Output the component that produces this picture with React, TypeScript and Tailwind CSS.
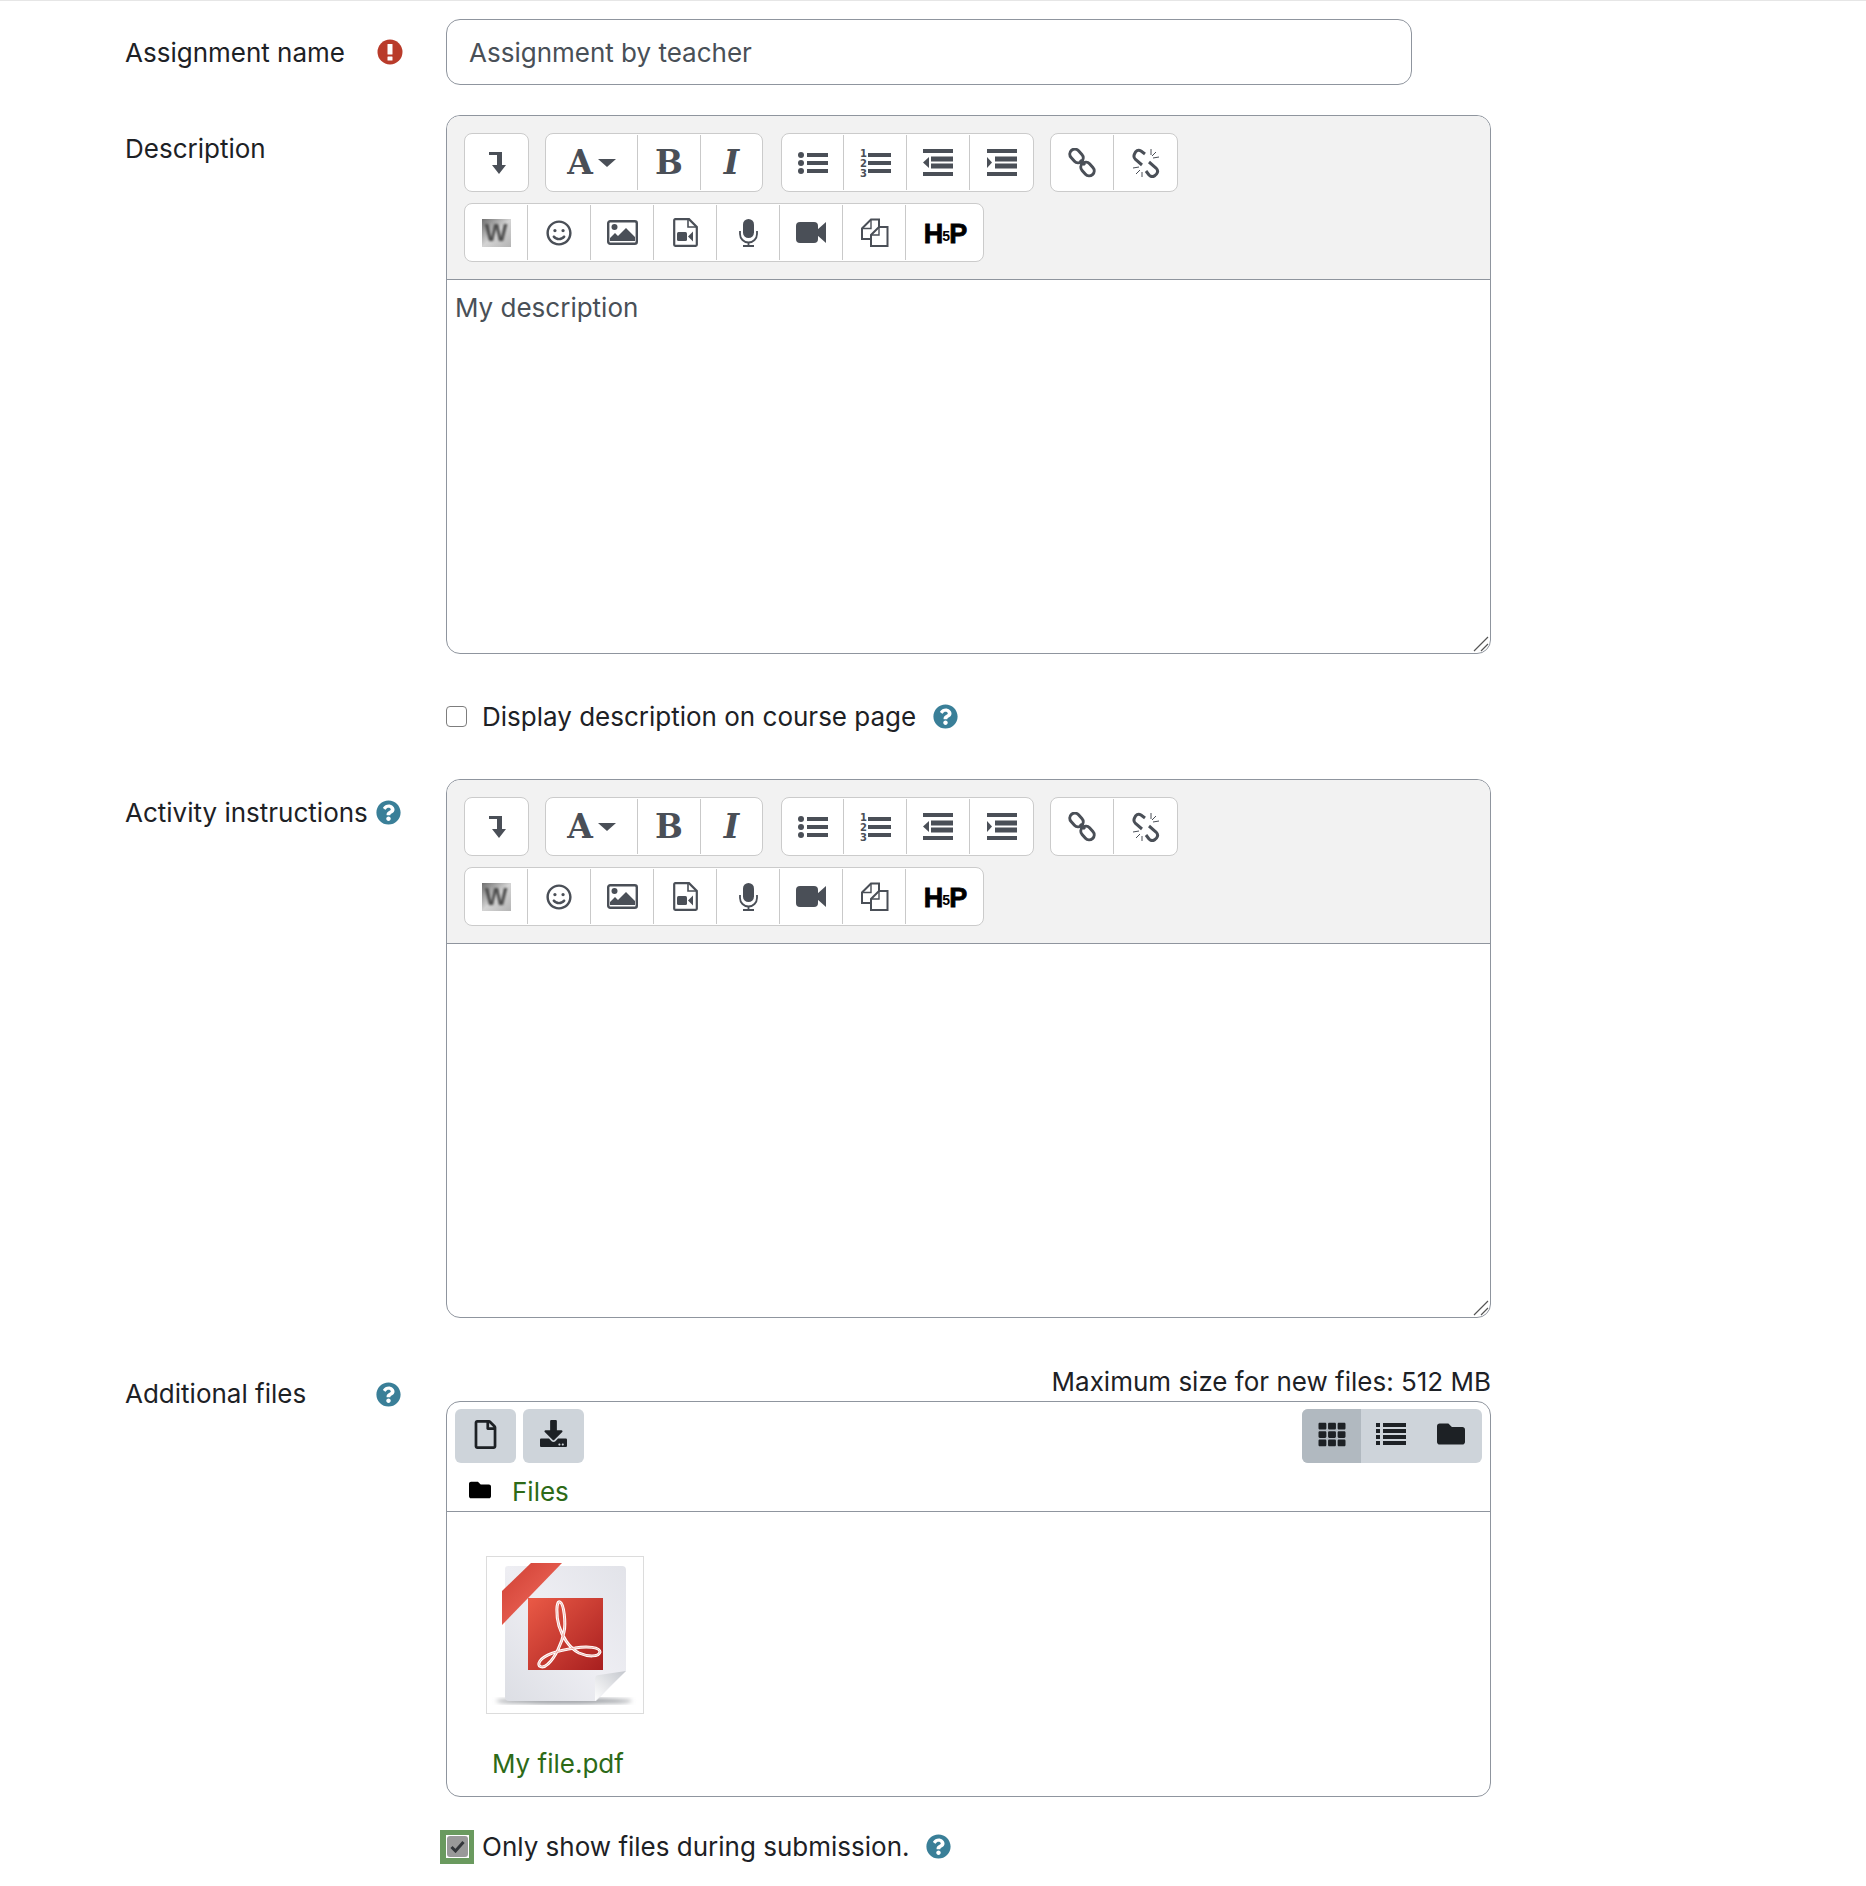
import React from "react";
import {
  FaDownload,
  FaFolder,
  FaQuestionCircle,
  FaRegFile,
  FaRegSmile,
  FaTh,
} from "react-icons/fa";

const Help = () => <FaQuestionCircle className="w-[25px] h-[25px] text-[#3a7f98] shrink-0" />;

const Required = () => (
  <svg width="26" height="26" viewBox="0 0 26 26" className="shrink-0">
    <circle cx="13" cy="13" r="12.500" fill="#b93b2a" />
    <rect x="10.500" y="5" width="5" height="10.500" rx="0.500" fill="#fff" />
    <rect x="10.500" y="17.500" width="5" height="4" rx="0.500" fill="#fff" />
  </svg>
);

const LevelDown = () => (
  <svg width="17" height="22" viewBox="0 0 17 22" className="fill-current ml-[1px]">
    <path d="M0 0h13v13h4l-7 9-7-9h5V3H0z" />
  </svg>
);

const Bullets = () => (
  <svg width="30" height="24" viewBox="0 0 30 24" className="fill-current">
    <circle cx="3" cy="4" r="3" />
    <circle cx="3" cy="12" r="3" />
    <circle cx="3" cy="20" r="3" />
    <rect x="9" y="2" width="21" height="4" />
    <rect x="9" y="10" width="21" height="4" />
    <rect x="9" y="18" width="21" height="4" />
  </svg>
);

const Numbers = () => (
  <svg width="31" height="36" viewBox="0 0 31 36" className="fill-current">
    <text x="0" y="12" fontSize="10" fontWeight="700" fontFamily="DejaVu Sans">1</text>
    <text x="0" y="22" fontSize="10" fontWeight="700" fontFamily="DejaVu Sans">2</text>
    <text x="0" y="32" fontSize="10" fontWeight="700" fontFamily="DejaVu Sans">3</text>
    <rect x="8" y="8" width="23" height="4" />
    <rect x="8" y="16" width="23" height="4" />
    <rect x="8" y="24" width="23" height="4" />
  </svg>
);

const Outdent = ({ flip }: { flip?: boolean }) => (
  <svg width="30" height="27" viewBox="0 0 30 27" className="fill-current">
    <rect x="0" y="0" width="30" height="4" />
    <rect x="0" y="23" width="30" height="4" />
    <rect x="8" y="7.500" width="22" height="5" />
    <rect x="8" y="14.500" width="22" height="5" />
    {flip ? <path d="M0 8l5 5.500L0 19z" /> : <path d="M6 8L0 13.500 6 19z" />}
  </svg>
);

const LinkIcon = () => (
  <svg width="28" height="30" viewBox="0 0 28 30" fill="none" stroke="currentColor" strokeWidth="3">
    <rect x="1" y="3" width="15" height="10" rx="5" transform="rotate(48 8.500 8)" />
    <rect x="12" y="16" width="15" height="10" rx="5" transform="rotate(48 19.500 21)" />
    <path d="M12 12l5 5" />
  </svg>
);

const UnlinkIcon = () => (
  <svg width="28" height="30" viewBox="0 0 28 30" fill="none" stroke="currentColor">
    <path d="M13 6L9 3Q6 1 3.500 4L2.500 6Q1 9 3.500 11.500L10 17" strokeWidth="3" />
    <path d="M17 14l7 6Q27 23 24.500 26L23 27.500Q20 30 17 27l-3-4" strokeWidth="3" />
    <path d="M19 1v6M24 4l-4 4M27 9l-6 1M1 20l6-1M4 26l4-4M10 29v-5" strokeWidth="1" />
  </svg>
);

const WordIcon = () => (
  <div className="w-[29px] h-[28px] flex items-center justify-center bg-gradient-to-br from-[#6f6f6f] via-[#d4d4d4] to-[#b4b4b4] overflow-hidden">
    <span className="text-[24px] leading-none font-bold text-[#4b4b4b] blur-[0.8px] font-['Liberation_Sans',sans-serif]">W</span>
  </div>
);

const ImageIcon = () => (
  <svg width="31" height="25" viewBox="0 0 31 25">
    <rect x="1.200" y="1.200" width="28.600" height="22.600" rx="2" fill="none" stroke="currentColor" strokeWidth="2.400" />
    <circle cx="7.500" cy="7" r="3" fill="currentColor" />
    <path d="M3 21v-3l5-5 3 3 8-8 9 9v4z" fill="currentColor" />
  </svg>
);

const FileVideoIcon = () => (
  <svg width="25" height="29" viewBox="0 0 25 29">
    <path d="M1.200 2.200a1 1 0 0 1 1-1H16l7.800 7.800v17.800a1 1 0 0 1-1 1H2.200a1 1 0 0 1-1-1z" fill="none" stroke="currentColor" strokeWidth="2.200" />
    <path d="M15 1.500V9h8" fill="none" stroke="currentColor" strokeWidth="1.600" />
    <rect x="4" y="14" width="10" height="9" rx="1.500" fill="currentColor" />
    <path d="M20 13.500v10L15 18.500z" fill="currentColor" />
  </svg>
);

const MicIcon = () => (
  <svg width="19" height="28" viewBox="0 0 19 28" fill="none" stroke="currentColor">
    <rect x="4" y="0" width="11" height="19" rx="5.500" fill="currentColor" stroke="none" />
    <path d="M1 12v3a8.500 8.500 0 0 0 17 0v-3" strokeWidth="1.800" />
    <path d="M9.500 23.500v3.500M4 27h11" strokeWidth="1.800" />
  </svg>
);

const VideoIcon = () => (
  <svg width="30" height="21" viewBox="0 0 30 21" className="fill-current">
    <rect x="0" y="0" width="22" height="21" rx="4" />
    <path d="M21 8l9-8v21l-9-8z" />
  </svg>
);

const CopyIcon = () => (
  <svg width="29" height="29" viewBox="0 0 29 29" fill="none" stroke="currentColor" strokeWidth="2">
    <path d="M19 9V1.500h-8L2 10.500V21h8" />
    <path d="M11 1.500V10.500H2" strokeWidth="1.400" />
    <path d="M19 9h8.500v19H11V17z" fill="#fff" />
    <path d="M19 9v8h-8" strokeWidth="1.400" />
  </svg>
);

const H5p = () => (
  <span className="flex items-center text-black font-black text-[27px] leading-none tracking-[-2px] font-['Liberation_Sans',sans-serif] [-webkit-text-stroke:0.8px_black] mt-[3px]">
    H<span className="text-[14px] font-bold mx-[1px] mt-[4px] [-webkit-text-stroke:0px_black]">5</span>P
  </span>
);

const Serif = ({ children, italic }: { children: React.ReactNode; italic?: boolean }) => (
  <span className={`text-[33px] leading-none font-bold font-['DejaVu_Serif',serif] ${italic ? "italic" : ""}`}>{children}</span>
);

const Cell = ({ w, last, children }: { w: string; last?: boolean; children: React.ReactNode }) => (
  <div className={`${w} my-[1px] flex items-center justify-center ${last ? "" : "border-r border-[#c9c9c9]"}`}>{children}</div>
);

const Group = ({ children }: { children: React.ReactNode }) => (
  <div className="h-[59px] flex bg-white border border-[#cbcbcb] rounded-[8px] text-[#4a4f57]">{children}</div>
);

const Toolbar = () => (
  <div className="h-[164px] bg-[#f2f2f2] border-b border-[#8f959e] pt-[17px] pl-[17px] rounded-t-[14px]">
    <div className="flex">
      <Group>
        <Cell w="w-[63px]" last>
          <LevelDown />
        </Cell>
      </Group>
      <div className="ml-[16px]">
        <Group>
          <Cell w="w-[92px]">
            <div className="flex items-center gap-[5px]">
              <Serif>A</Serif>
              <span className="w-0 h-0 border-x-[9px] border-x-transparent border-t-[8px] border-t-[#4a4f57]" />
            </div>
          </Cell>
          <Cell w="w-[63px]">
            <Serif>B</Serif>
          </Cell>
          <Cell w="w-[61px]" last>
            <Serif italic>I</Serif>
          </Cell>
        </Group>
      </div>
      <div className="ml-[18px]">
        <Group>
          <Cell w="w-[62px]">
            <Bullets />
          </Cell>
          <Cell w="w-[63px]">
            <Numbers />
          </Cell>
          <Cell w="w-[63px]">
            <Outdent />
          </Cell>
          <Cell w="w-[63px]" last>
            <Outdent flip />
          </Cell>
        </Group>
      </div>
      <div className="ml-[16px]">
        <Group>
          <Cell w="w-[63px]">
            <LinkIcon />
          </Cell>
          <Cell w="w-[63px]" last>
            <UnlinkIcon />
          </Cell>
        </Group>
      </div>
    </div>
    <div className="flex mt-[11px]">
      <Group>
        <Cell w="w-[63px]">
          <WordIcon />
        </Cell>
        <Cell w="w-[63px]">
          <FaRegSmile className="w-[26px] h-[26px]" />
        </Cell>
        <Cell w="w-[63px]">
          <ImageIcon />
        </Cell>
        <Cell w="w-[63px]">
          <FileVideoIcon />
        </Cell>
        <Cell w="w-[63px]">
          <MicIcon />
        </Cell>
        <Cell w="w-[63px]">
          <VideoIcon />
        </Cell>
        <Cell w="w-[63px]">
          <CopyIcon />
        </Cell>
        <Cell w="w-[77px]" last>
          <H5p />
        </Cell>
      </Group>
    </div>
  </div>
);

const Editor = ({ height, text }: { height: string; text?: string }) => (
  <div className={`${height} relative flex flex-col border border-[#8f959e] rounded-[14px] bg-white`}>
    <Toolbar />
    <div className="flex-1 px-[8px] pt-[8px] text-[#495057]">{text}</div>
    <svg width="16" height="16" viewBox="0 0 16 16" className="absolute right-[1px] bottom-[1px] stroke-[#555]" fill="none">
      <path d="M1 15L15 1M8 15l7-7" strokeWidth="1.200" />
    </svg>
  </div>
);

const PdfIcon = () => (
  <svg width="156" height="156" viewBox="0 0 156 156">
    <defs>
      <linearGradient id="page" x1="0" y1="1" x2="1" y2="0">
        <stop offset="0" stopColor="#dcdee4" />
        <stop offset="0.500" stopColor="#eeeef3" />
        <stop offset="1" stopColor="#e2e3e9" />
      </linearGradient>
      <linearGradient id="red" x1="0" y1="0" x2="1" y2="1">
        <stop offset="0" stopColor="#ea5a46" />
        <stop offset="1" stopColor="#a81f1f" />
      </linearGradient>
      <linearGradient id="ribbon" x1="0" y1="0" x2="1" y2="1">
        <stop offset="0" stopColor="#cf3f33" />
        <stop offset="0.500" stopColor="#e2584b" />
        <stop offset="1" stopColor="#c23328" />
      </linearGradient>
      <linearGradient id="fold" x1="0" y1="1" x2="1" y2="0">
        <stop offset="0" stopColor="#ffffff" />
        <stop offset="1" stopColor="#c4c7cd" />
      </linearGradient>
      <filter id="soft">
        <feGaussianBlur stdDeviation="2" />
      </filter>
    </defs>
    <ellipse cx="77" cy="144" rx="68" ry="3" fill="#9a9da2" filter="url(#soft)" />
    <path d="M21 9h114a4 4 0 0 1 4 4v101l-30 30H22a4 4 0 0 1-4-4V12a3 3 0 0 1 3-3z" fill="url(#page)" />
    <path d="M108 144v-22a4 4 0 0 1 4-4l27-4z" fill="url(#fold)" />
    <path d="M44 6h31L15 68V34z" fill="url(#ribbon)" />
    <rect x="41" y="41" width="75" height="72" fill="url(#red)" />
    <path
      d="M73 45c-4-2-4 14-1 24 3 10 10 22 20 27 9 4 20 4 21-1 0-5-13-6-25-4-14 2-30 6-35 13-4 6 3 8 8 3 7-6 14-21 16-32 2-9 0-28-4-30z"
      fill="none"
      stroke="#ffffff"
      strokeWidth="3"
    />
    <path
      d="M73 45c-4-2-4 14-1 24 3 10 10 22 20 27 9 4 20 4 21-1 0-5-13-6-25-4-14 2-30 6-35 13-4 6 3 8 8 3 7-6 14-21 16-32 2-9 0-28-4-30z"
      fill="none"
      stroke="#e58a80"
      strokeWidth="0.600"
    />
  </svg>
);

const App = () => {
  return (
    <div className="min-h-[1886px] bg-white border-t border-[#e6e6e6] pt-[18px] pl-[125px] text-[26px] leading-[39px] text-[#1d2125] font-['Inter',sans-serif]">
      <div className="flex">
        <div className="w-[321px] flex items-center">
          <div className="w-[278px] flex items-center justify-between">
            <span>Assignment name</span>
            <Required />
          </div>
        </div>
        <div className="w-[966px] h-[66px] flex items-center px-[22px] border border-[#8f959e] rounded-[14px] text-[#495057]">
          Assignment by teacher
        </div>
      </div>

      <div className="flex mt-[30px]">
        <div className="w-[321px] pt-[14px]">Description</div>
        <div className="w-[1045px]">
          <Editor height="h-[539px]" text="My description" />
          <div className="flex items-center mt-[43px]">
            <span className="w-[21px] h-[21px] border border-[#7d7d7d] rounded-[4px] bg-white -mt-[1px]" />
            <span className="ml-[15px]">Display description on course page</span>
            <span className="ml-[17px] flex">
              <Help />
            </span>
          </div>
        </div>
      </div>

      <div className="flex mt-[43px]">
        <div className="w-[321px] pt-[14px]">
          <div className="w-[276px] flex items-center justify-between">
            <span>Activity instructions</span>
            <Help />
          </div>
        </div>
        <div className="w-[1045px]">
          <Editor height="h-[539px]" />
        </div>
      </div>

      <div className="flex mt-[44px]">
        <div className="w-[321px] pt-[12px]">
          <div className="w-[276px] flex items-center justify-between">
            <span>Additional files</span>
            <span className="mt-[1px] flex">
              <Help />
            </span>
          </div>
        </div>
        <div className="w-[1045px]">
          <div className="text-right">Maximum size for new files: 512 MB</div>
          <div className="h-[396px] border border-[#8f959e] rounded-[14px]">
            <div className="h-[110px] border-b border-[#8f959e] pt-[7px] px-[8px]">
              <div className="flex justify-between">
                <div className="flex gap-[7px]">
                  <div className="w-[61px] h-[54px] bg-[#ced4da] rounded-[6px] flex items-center justify-center text-[#1d2125]">
                    <FaRegFile className="w-[25px] h-[29px] -mt-[3px]" />
                  </div>
                  <div className="w-[61px] h-[54px] bg-[#ced4da] rounded-[6px] flex items-center justify-center text-[#1d2125]">
                    <FaDownload className="w-[27px] h-[27px] -mt-[5px]" />
                  </div>
                </div>
                <div className="flex h-[54px] rounded-[6px] overflow-hidden bg-[#ced4da] text-[#1d2125]">
                  <div className="w-[59px] bg-[#b1b9c0] flex items-center justify-center">
                    <FaTh className="w-[30px] h-[27px] -mt-[4px]" />
                  </div>
                  <div className="w-[60px] flex items-center justify-center">
                    <svg width="30" height="24" viewBox="0 0 30 24" className="fill-current -mt-[4px]">
                      <rect x="0" y="1" width="4" height="4" />
                      <rect x="0" y="7" width="4" height="4" />
                      <rect x="0" y="13" width="4" height="4" />
                      <rect x="0" y="19" width="4" height="4" />
                      <rect x="7" y="1" width="23" height="4" />
                      <rect x="7" y="7" width="23" height="4" />
                      <rect x="7" y="13" width="23" height="4" />
                      <rect x="7" y="19" width="23" height="4" />
                    </svg>
                  </div>
                  <div className="w-[61px] flex items-center justify-center">
                    <FaFolder className="w-[28px] h-[28px] -mt-[4px] -ml-[2px]" />
                  </div>
                </div>
              </div>
              <div className="flex items-center mt-[9px] ml-[14px]">
                <FaFolder className="w-[22px] h-[22px] text-black -mt-[3px]" />
                <span className="ml-[21px] text-[#2d6a17]">Files</span>
              </div>
            </div>
            <div className="pt-[44px] pl-[39px]">
              <div className="w-[158px] h-[158px] border border-[#dcdcdc]">
                <PdfIcon />
              </div>
              <div className="mt-[30px] ml-[6px] text-[#2d6a17]">My file.pdf</div>
            </div>
          </div>
          <div className="flex items-center mt-[30px] -ml-[6px]">
            <div className="w-[34px] h-[34px] bg-[#6a9a5f] flex items-center justify-center">
              <div className="w-[23px] h-[23px] bg-white flex items-center justify-center">
                <div className="w-[21px] h-[21px] bg-[#999999] rounded-[3px] flex items-center justify-center">
                  <svg width="15" height="13" viewBox="0 0 15 13" fill="none" stroke="#33363a" strokeWidth="3">
                    <path d="M1.500 7l4 4 8-9" />
                  </svg>
                </div>
              </div>
            </div>
            <span className="ml-[8px]">Only show files during submission.</span>
            <span className="ml-[16px] flex">
              <Help />
            </span>
          </div>
        </div>
      </div>
    </div>
  );
};

export default App;
